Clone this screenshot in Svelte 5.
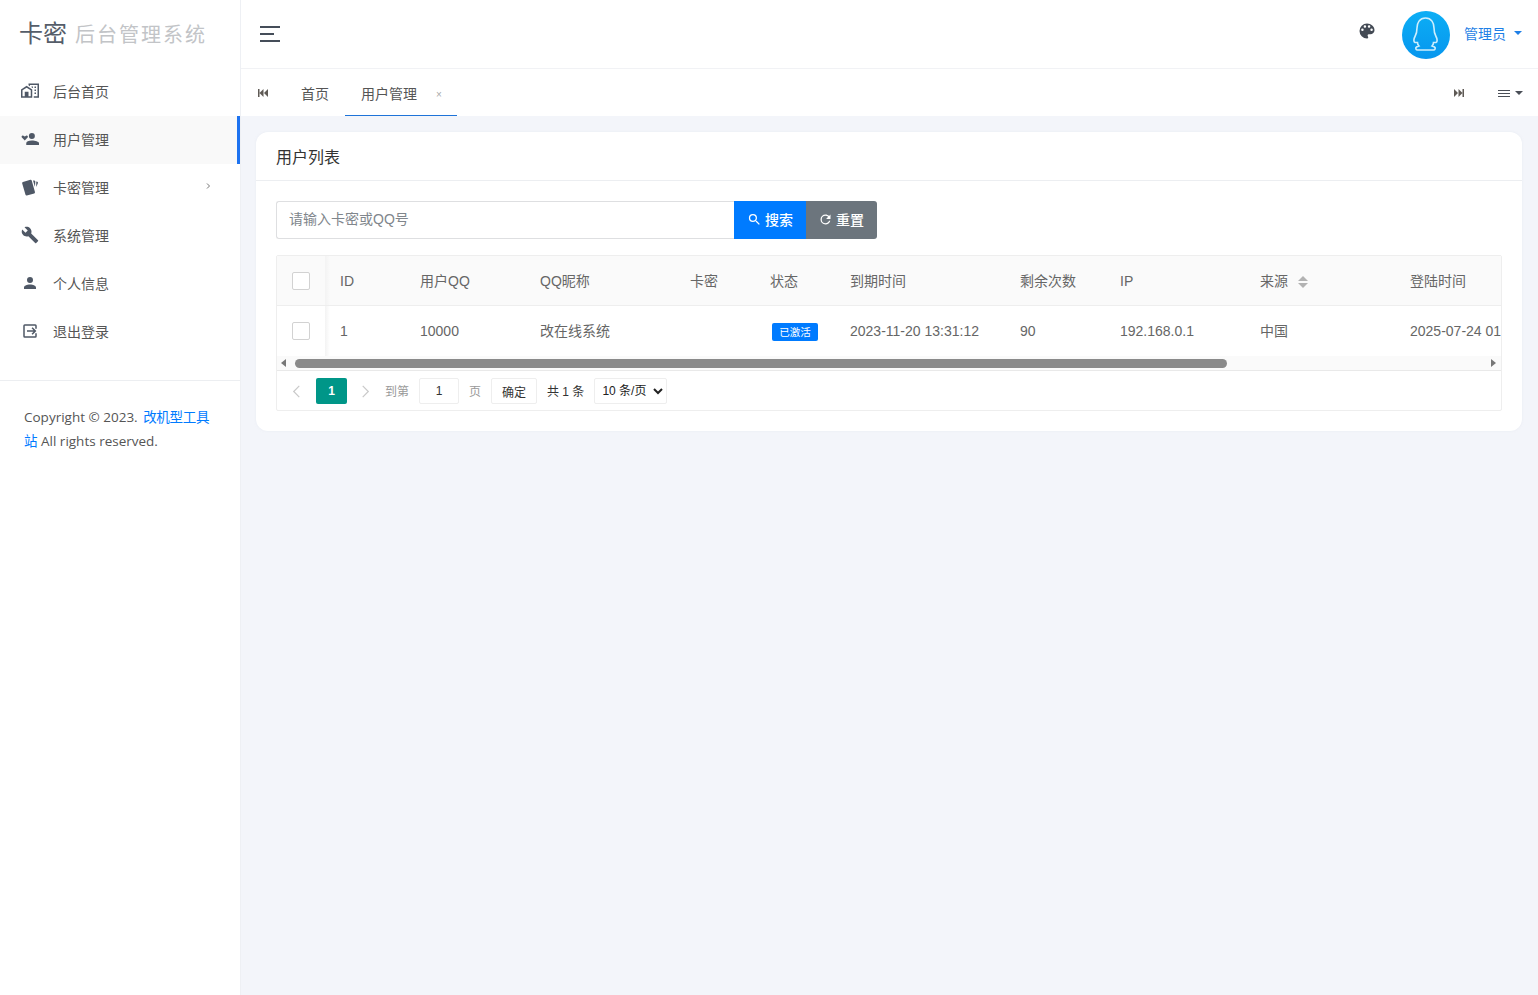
<script>
  const menu = [
    { label: '后台首页', icon: 'M10,2V4.26L12,5.59V4H22V19H17V21H24V2H10M7.5,5L0,10V21H15V10L7.5,5M14,6V6.93L15.61,8H16V6H14M18,6V8H20V6H18M7.5,7.5L13,11V19H10V13H5V19H2V11L7.5,7.5M18,10V12H20V10H18M18,14V16H20V14H18Z' },
    { label: '用户管理', active: true, icon: 'M14.5,4A4,4 0 0,1 18.5,8A4,4 0 0,1 14.5,12A4,4 0 0,1 10.5,8A4,4 0 0,1 14.5,4M14.5,14C19,14 24,15.5 24,17.5V20H7V17.5C7,15.5 10,14 14.5,14M5,14L1.2,10C0,8.7 1.5,6.5 3.2,7.5L5,8.7L6.8,7.5C8.500,6.5 10,8.7 8.8,10Z' },
    { label: '卡密管理', arrow: true, icon: 'M2.6,5.4L12.5,2.4C13.3,2.2 14,2.6 14.3,3.4L18.6,18.800C18.8,19.6 18.4,20.4 17.6,20.6L7.8,23.400C7,23.600 6.200,23.200 6,22.400L1.600,7.200C1.400,6.400 1.800,5.600 2.600,5.400M16,3.2L17.800,3.400C18.600,3.500 19.200,4.200 19.100,5L18.500,11.500ZM20.300,4.500L21.800,5.100C22.500,5.400 22.800,6.200 22.500,7L20.300,12Z' },
    { label: '系统管理', icon: 'M22.7,19L13.6,9.9C14.5,7.6 14,4.9 12.1,3C10.1,1 7.1,0.6 4.7,1.7L9,6L6,9L1.6,4.7C0.4,7.1 0.9,10.1 2.9,12.1C4.8,14 7.5,14.5 9.8,13.6L18.9,22.7C19.3,23.1 19.9,23.1 20.3,22.7L22.6,20.4C23.1,20 23.1,19.3 22.7,19Z' },
    { label: '个人信息', icon: 'M12,4A4,4 0 0,1 16,8A4,4 0 0,1 12,12A4,4 0 0,1 8,8A4,4 0 0,1 12,4M12,14C16.42,14 20,15.79 20,18V20H4V18C4,15.79 7.58,14 12,14Z' },
    { label: '退出登录', icon: 'M5,3H19A2,2 0 0,1 21,5V9H19V5H5V19H19V15H21V19A2,2 0 0,1 19,21H5A2,2 0 0,1 3,19V5A2,2 0 0,1 5,3M14.08,15.58L15.5,17L20.5,12L15.5,7L14.08,8.41L16.67,11H8V13H16.67L14.08,15.58Z' }
  ];
  const columns = [
    { label: 'ID', width: 80, cls: 'after-check' },
    { label: '用户QQ', width: 120, cls: 'cjk' },
    { label: 'QQ昵称', width: 150, cls: 'cjk' },
    { label: '卡密', width: 80, cls: 'cjk' },
    { label: '状态', width: 80, cls: 'cjk' },
    { label: '到期时间', width: 170, cls: 'cjk' },
    { label: '剩余次数', width: 100, cls: 'cjk' },
    { label: 'IP', width: 140 },
    { label: '来源', width: 150, sort: true, cls: 'cjk' },
    { label: '登陆时间', width: 200, cls: 'cjk' }
  ];
</script>

<div class="page">
  <aside class="sidebar">
    <div class="logo"><span class="logo-main">卡密</span><span class="logo-sub">后台管理系统</span></div>
    <nav class="menu">
      {#each menu as item}
        <div class="menu-item" class:active={item.active}>
          <svg class="menu-icon" viewBox="0 0 24 24"><path d={item.icon} /></svg>
          <span>{item.label}</span>
          {#if item.arrow}<svg class="menu-arrow" viewBox="0 0 6 8"><path d="M2 1.5L4.5 4L2 6.5" /></svg>{/if}
        </div>
      {/each}
    </nav>
    <div class="copyright">Copyright © 2023. <span class="link first-part">改机型工具</span><span class="link">站</span> All rights reserved.</div>
  </aside>

  <div class="main">
    <header class="topbar">
      <div class="burger"><i></i><i class="short"></i><i></i></div>
      <div class="top-right">
        <svg class="palette" viewBox="0 0 24 24"><path d="M17.5,12A1.5,1.5 0 0,1 16,10.5A1.5,1.5 0 0,1 17.5,9A1.5,1.5 0 0,1 19,10.5A1.5,1.5 0 0,1 17.5,12M14.5,8A1.5,1.5 0 0,1 13,6.5A1.5,1.5 0 0,1 14.5,5A1.5,1.5 0 0,1 16,6.5A1.5,1.5 0 0,1 14.5,8M9.5,8A1.5,1.5 0 0,1 8,6.5A1.5,1.5 0 0,1 9.5,5A1.5,1.5 0 0,1 11,6.5A1.5,1.5 0 0,1 9.5,8M6.5,12A1.5,1.5 0 0,1 5,10.5A1.5,1.5 0 0,1 6.5,9A1.5,1.5 0 0,1 8,10.5A1.5,1.5 0 0,1 6.5,12M12,3A9,9 0 0,0 3,12A9,9 0 0,0 12,21A1.5,1.5 0 0,0 13.5,19.5C13.5,19.11 13.35,18.76 13.11,18.5C12.88,18.23 12.73,17.88 12.73,17.5A1.5,1.5 0 0,1 14.23,16H16A5,5 0 0,0 21,11C21,6.58 16.97,3 12,3Z" /></svg>
        <div class="avatar">
          <svg viewBox="0 0 48 48"><path d="M23.5 7C17.5 7 15 12 15 17C15 21 14.5 23 13 25.5C11.5 28 11.5 31 13 31.5L15.5 31.5C15.5 33 16 34 17 35L14.5 36C13 37 14 39 15.5 39H31.5C33 39 34 37 32.5 36L30 35C31 34 31.5 33 31.5 31.5L34 31.5C35.5 31 35.5 28 34 25.5C32.5 23 32 21 32 17C32 12 29.5 7 23.5 7Z" /></svg>
        </div>
        <div class="user">管理员<span class="caret"></span></div>
      </div>
    </header>

    <div class="tabs">
      <svg class="tab-skip" viewBox="0 0 12 10"><path d="M1 1H2.5V9H1ZM6.5 1V9L2.5 5ZM11 1V9L7 5Z" /></svg>
      <div class="tab first">首页</div>
      <div class="tab current">用户管理<span class="close">×</span></div>
      <div class="tab-right">
        <svg class="tab-skip" viewBox="0 0 12 10"><path d="M11 1H9.500V9H11ZM5.500 1V9L9.500 5ZM1 1V9L5 5Z" /></svg>
        <div class="tab-menu"><i></i><i></i><i></i></div>
        <span class="caret dark"></span>
      </div>
    </div>

    <main class="content">
      <section class="card">
        <div class="card-title">用户列表</div>
        <div class="card-body">
          <div class="search">
            <input class="search-input" placeholder="请输入卡密或QQ号" />
            <button class="btn primary"><svg viewBox="0 0 24 24"><path d="M9.500,3A6.500,6.500 0 0,1 16,9.500C16,11.110 15.410,12.590 14.440,13.730L14.710,14H15.500L20.500,19L19,20.500L14,15.500V14.710L13.730,14.440C12.590,15.410 11.110,16 9.500,16A6.500,6.500 0 0,1 3,9.500A6.500,6.500 0 0,1 9.500,3M9.500,5C7,5 5,7 5,9.500C5,12 7,14 9.500,14C12,14 14,12 14,9.500C14,7 12,5 9.500,5Z" /></svg><span>搜索</span></button>
            <button class="btn secondary"><svg viewBox="0 0 24 24"><path d="M17.650,6.350C16.200,4.900 14.210,4 12,4A8,8 0 0,0 4,12A8,8 0 0,0 12,20C15.730,20 18.840,17.450 19.730,14H17.650C16.830,16.330 14.610,18 12,18A6,6 0 0,1 6,12A6,6 0 0,1 12,6C13.660,6 15.140,6.690 16.220,7.780L13,11H20V4L17.650,6.350Z" /></svg><span>重置</span></button>
          </div>

          <div class="table-box">
            <div class="table-clip">
              <table>
                <colgroup>
                  <col style="width: 48px" />
                  {#each columns as c}<col style="width: {c.width}px" />{/each}
                </colgroup>
                <thead>
                  <tr>
                    <th class="check-cell"><span class="check"></span></th>
                    {#each columns as c}
                      <th class={c.cls}>{c.label}{#if c.sort}<span class="sort"><i class="up"></i><i class="down"></i></span>{/if}</th>
                    {/each}
                  </tr>
                </thead>
                <tbody>
                  <tr>
                    <td class="check-cell"><span class="check"></span></td>
                    <td class="after-check">1</td>
                    <td>10000</td>
                    <td class="cjk">改在线系统</td>
                    <td></td>
                    <td><span class="badge">已激活</span></td>
                    <td>2023-11-20 13:31:12</td>
                    <td>90</td>
                    <td>192.168.0.1</td>
                    <td class="cjk">中国</td>
                    <td>2025-07-24 01:30:00</td>
                  </tr>
                </tbody>
              </table>
            </div>
            <div class="scrollbar">
              <i class="arrow left"></i>
              <div class="thumb"></div>
              <i class="arrow right"></i>
            </div>
            <div class="pager">
              <svg class="chev" viewBox="0 0 8 14"><path d="M7 1L1 7L7 13" /></svg>
              <span class="page-num">1</span>
              <svg class="chev next" viewBox="0 0 8 14"><path d="M1 1L7 7L1 13" /></svg>
              <span class="muted goto">到第</span>
              <input class="page-input" value="1" />
              <span class="muted unit">页</span>
              <button class="confirm">确定</button>
              <span class="total">共 1 条</span>
              <select class="limit"><option>10 条/页</option><option>20 条/页</option></select>
            </div>
          </div>
        </div>
      </section>
    </main>
  </div>
</div>

<style>
  :global(body) {
    margin: 0;
    background: #f3f5fa;
    font-family: "Liberation Sans", "Noto Sans CJK SC", sans-serif;
    font-size: 14px;
    color: #555;
  }
  .page {
    display: flex;
    height: 995px;
    overflow: hidden;
  }
  .sidebar {
    box-sizing: border-box;
    width: 241px;
    flex: none;
    background: #fff;
    border-right: 1px solid #eef0f4;
  }
  .logo {
    height: 68px;
    display: flex;
    align-items: baseline;
    padding: 14px 0 0 19px;
    box-sizing: border-box;
    gap: 8px;
  }
  .logo-main {
    font-size: 24px;
    color: #555d69;
  }
  .logo-sub {
    font-size: 20px;
    letter-spacing: 2px;
    color: #c2c4c7;
  }
  .menu {
    border-bottom: 1px solid #eceef1;
    padding-bottom: 24px;
  }
  .menu-item {
    position: relative;
    box-sizing: border-box;
    height: 48px;
    display: flex;
    align-items: center;
    padding: 0 0 2px 21px;
    color: #555;
  }
  .menu-item.active {
    background: #f9f9f9;
    border-right: 3px solid #1e73f0;
  }
  .menu-icon {
    width: 18px;
    height: 18px;
    margin-right: 14px;
    fill: #4f5866;
  }
  .menu-arrow {
    position: absolute;
    right: 29px;
    top: 18px;
    width: 6px;
    height: 8px;
    fill: none;
    stroke: #777;
    stroke-width: 1;
  }
  .copyright {
    padding: 24px 24px 0;
    line-height: 24px;
    color: #555;
    font-family: "Open Sans", "Noto Sans CJK SC", sans-serif;
    font-size: 13.5px;
  }
  .link {
    color: #007bff;
  }
  .first-part {
    margin-left: 2px;
    letter-spacing: -0.3px;
  }
  .main {
    flex: 1;
    min-width: 0;
    display: flex;
    flex-direction: column;
  }
  .topbar {
    box-sizing: border-box;
    height: 69px;
    flex: none;
    background: #fff;
    border-bottom: 1px solid #f1f2f5;
    display: flex;
    align-items: center;
    justify-content: space-between;
    padding: 0 16px 0 19px;
  }
  .burger {
    display: flex;
    flex-direction: column;
    gap: 5px;
    width: 20px;
  }
  .burger i {
    display: block;
    height: 2px;
    background: #454d59;
  }
  .burger .short {
    width: 14px;
  }
  .top-right {
    display: flex;
    align-items: center;
  }
  .palette {
    width: 20px;
    height: 20px;
    fill: #434a54;
    margin: -6px 25px 0 0;
  }
  .avatar {
    width: 48px;
    height: 48px;
    margin-top: 2px;
    border-radius: 50%;
    background: linear-gradient(180deg, #0caef5, #0796ee);
    margin-right: 14px;
  }
  .avatar svg {
    display: block;
    width: 48px;
    height: 48px;
    fill: none;
    stroke: #cdeefd;
    stroke-width: 1.6;
  }
  .user {
    color: #1e7fe6;
    display: flex;
    align-items: center;
    padding-bottom: 2px;
  }
  .caret {
    display: inline-block;
    width: 0;
    height: 0;
    margin-left: 8px;
    border-left: 4px solid transparent;
    border-right: 4px solid transparent;
    border-top: 4px solid #1e7fe6;
  }
  .caret.dark {
    border-top-color: #4a4f57;
    margin-left: 5px;
  }
  .tabs {
    box-sizing: border-box;
    height: 47px;
    flex: none;
    background: #fff;
    display: flex;
    align-items: stretch;
    padding-left: 16px;
    color: #555;
  }
  .tab-skip {
    width: 12px;
    height: 10px;
    fill: #5f5a55;
    align-self: center;
  }
  .tab {
    display: flex;
    align-items: center;
    padding: 1px 0 0;
    box-sizing: border-box;
    height: 47px;
  }
  .tab.first {
    margin-left: 32px;
    width: 44px;
  }
  .tab.current {
    width: 112px;
    padding-left: 16px;
    border-bottom: 1px solid #1e73d8;
  }
  .close {
    color: #aaa;
    font-size: 10px;
    margin: 4px 0 0 19px;
  }
  .tab-right {
    margin-left: auto;
    display: flex;
    align-items: center;
    padding-right: 15px;
  }
  .tab-menu {
    display: flex;
    flex-direction: column;
    gap: 2px;
    width: 12px;
    margin: 2px 0 0 33px;
  }
  .tab-menu i {
    display: block;
    height: 1px;
    background: #4a4f57;
  }
  .content {
    flex: 1;
    padding: 16px 16px 16px 15px;
  }
  .card {
    background: #fff;
    border-radius: 12px;
    box-shadow: 0 0 2px rgba(220, 225, 235, 0.5);
  }
  .card-title {
    box-sizing: border-box;
    height: 49px;
    padding: 0 20px;
    border-bottom: 1px solid #eceef1;
    display: flex;
    align-items: center;
    font-size: 16px;
    color: #333;
  }
  .card-body {
    padding: 20px;
  }
  .search {
    display: flex;
    margin-bottom: 16px;
    height: 38px;
  }
  .search-input {
    box-sizing: border-box;
    width: 458px;
    height: 38px;
    padding: 0 12px 2px;
    border: 1px solid #dedfe1;
    border-right: 0;
    border-radius: 3px 0 0 3px;
    outline: none;
    font: inherit;
    color: #555;
  }
  .search-input::placeholder {
    color: #80868c;
  }
  .btn {
    height: 38px;
    border: 0;
    color: #fff;
    font: 500 14px "Liberation Sans", "Noto Sans CJK SC", sans-serif;
    display: flex;
    align-items: center;
    justify-content: center;
    gap: 3px;
    padding: 0 0 2px;
  }
  .btn svg {
    width: 15px;
    height: 15px;
    fill: #fff;
    margin-top: 1px;
  }
  .primary {
    width: 72px;
    background: #007bff;
  }
  .secondary {
    width: 71px;
    padding-right: 1px;
    background: #6c757d;
    border-radius: 0 3px 3px 0;
  }
  .table-box {
    border: 1px solid #eeeeee;
    border-radius: 2px;
    width: 1226px;
    box-sizing: border-box;
  }
  .table-clip {
    overflow: hidden;
  }
  table {
    table-layout: fixed;
    border-collapse: separate;
    border-spacing: 0;
    width: 1170px;
  }
  th,
  td {
    box-sizing: border-box;
    height: 50px;
    padding: 0 15px;
    text-align: left;
    font-weight: 400;
    white-space: nowrap;
    color: #666;
    overflow: hidden;
  }
  th {
    background: #fafafa;
    border-bottom: 1px solid #eeeeee;
  }
  th.cjk,
  td.cjk {
    padding-bottom: 2px;
  }
  th.after-check,
  td.after-check {
    background-image: linear-gradient(90deg, #f3f3f3, transparent 5px);
  }
  .check-cell {
    padding: 0 0 0 15px;
    line-height: 0;
  }
  .check {
    display: inline-block;
    box-sizing: border-box;
    width: 18px;
    height: 18px;
    background: #fff;
    border: 1px solid #d2d2d2;
    border-radius: 2px;
  }
  .sort {
    display: inline-flex;
    flex-direction: column;
    gap: 2px;
    margin-left: 10px;
    vertical-align: middle;
  }
  .sort i {
    display: block;
    width: 0;
    height: 0;
    border-left: 5px solid transparent;
    border-right: 5px solid transparent;
  }
  .sort .up {
    border-bottom: 5px solid #b2b2b2;
  }
  .sort .down {
    border-top: 5px solid #b2b2b2;
  }
  .badge {
    display: inline-block;
    box-sizing: border-box;
    width: 46px;
    height: 18px;
    margin-left: 2px;
    line-height: 18px;
    text-align: center;
    background: #007bff;
    color: #fff;
    font-size: 10.500px;
    border-radius: 2px;
    vertical-align: -1px;
  }
  .scrollbar {
    height: 14px;
    background: #fafafa;
    border-bottom: 1px solid #e9e9e9;
    display: flex;
    align-items: center;
    padding-left: 4px;
  }
  .thumb {
    width: 932px;
    height: 9px;
    border-radius: 5px;
    background: #8a8a8a;
    margin-left: 9px;
  }
  .arrow {
    width: 0;
    height: 0;
    border-top: 4.500px solid transparent;
    border-bottom: 4.500px solid transparent;
  }
  .arrow.left {
    border-right: 5px solid #777;
  }
  .arrow.right {
    border-left: 5px solid #777;
    margin-left: auto;
    margin-right: 5px;
  }
  .pager {
    height: 39px;
    padding: 1px 0 0 15px;
    box-sizing: border-box;
    display: flex;
    align-items: center;
    font-size: 12px;
    color: #333;
  }
  .chev {
    width: 9px;
    height: 13px;
    fill: none;
    stroke: #c9c9c9;
    stroke-width: 1.300;
  }
  .page-num {
    width: 31px;
    height: 26px;
    margin-left: 15px;
    background: #009688;
    border-radius: 2px;
    color: #fff;
    text-align: center;
    line-height: 26px;
    font-weight: 700;
  }
  .chev.next {
    margin-left: 14px;
  }
  .muted {
    color: #999;
    padding-bottom: 2px;
  }
  .goto {
    margin-left: 15px;
  }
  .page-input {
    box-sizing: border-box;
    width: 40px;
    height: 26px;
    margin-left: 10px;
    border: 1px solid #eeeeee;
    border-radius: 2px;
    text-align: center;
    font: inherit;
    color: #333;
    outline: none;
  }
  .unit {
    margin-left: 10px;
  }
  .confirm {
    box-sizing: border-box;
    width: 46px;
    height: 26px;
    margin-left: 10px;
    padding: 0;
    border: 1px solid #eeeeee;
    border-radius: 2px;
    background: #fff;
    font: inherit;
    color: #333;
  }
  .total {
    margin-left: 10px;
    padding-bottom: 2px;
  }
  .limit {
    box-sizing: border-box;
    width: 73px;
    height: 26px;
    margin-left: 10px;
    padding: 0 0 0 3px;
    border: 1px solid #eeeeee;
    border-radius: 2px;
    background: #fff;
    font: inherit;
    color: #222;
    outline: none;
  }
</style>
